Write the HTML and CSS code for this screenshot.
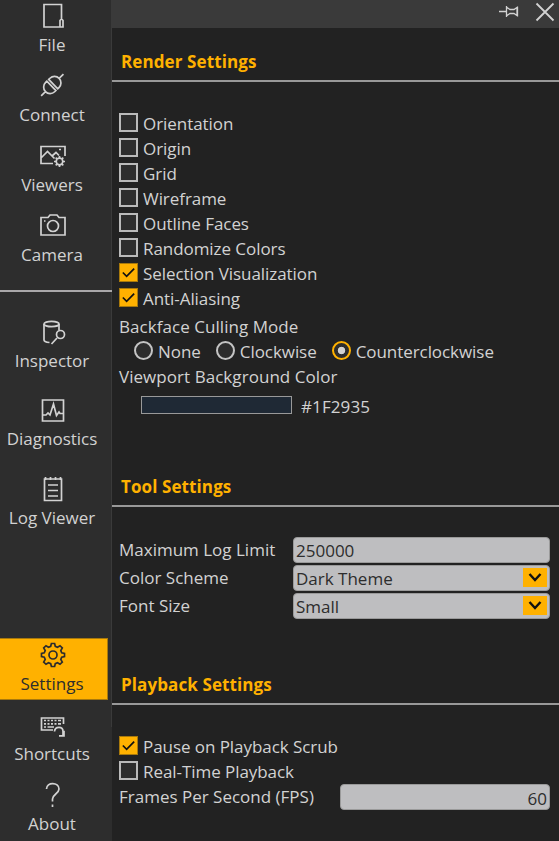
FILE: index.html
```html
<!DOCTYPE html>
<html lang="en">
<head>
<meta charset="utf-8">
<title>Settings</title>
<link rel="stylesheet" href="styles.css">
</head>
<body>
<div class="app">
  <nav class="sidebar">
    <div class="group group-top">
      <a class="item"><svg class="icon" viewBox="0 0 28 28"><path d="M22.500 17V2.500H5v22.500h17M21 18.500q1.500-2.500 3 0V25h-3z"/></svg><span>File</span></a>
      <a class="item"><svg class="icon" viewBox="0 0 28 28"><g transform="translate(13.300 13) rotate(-44)"><path d="M-1.300-6.500H-3a6.500 6.500 0 0 0 0 13h1.700zM1.300-6.500H3a6.500 6.500 0 0 1 0 13H1.300zM-9.500 0h-6M9.500 0h6"/></g></svg><span>Connect</span></a>
      <a class="item"><svg class="icon" viewBox="0 0 28 28"><path d="M14 21.500H2v-17h24V14M2.500 15.500l6-6 7 7M13 14l4-3.500 3 3M20 7.500h2"/><circle cx="20.500" cy="19.500" r="3.300"/><path d="M20.500 14v2M20.500 23v2M15 19.500h2M24 19.500h2M16.700 15.700l1.300 1.300M23 22l1.300 1.300M16.700 23.300L18 22M23 17l1.300-1.300"/></svg><span>Viewers</span></a>
      <a class="item"><svg class="icon" viewBox="0 0 28 28"><path d="M2 5.500h7l2-2.500h7l2 2.500h6v17.500H2zM5 9h1.500"/><circle cx="14" cy="14" r="5.500"/></svg><span>Camera</span></a>
    </div>
    <div class="group group-middle">
      <a class="item"><svg class="icon" viewBox="0 0 28 28"><ellipse cx="12.500" cy="5" rx="7.500" ry="2.700"/><path d="M5 5v16c0 1.500 2 2.300 5.500 2.500M20 5v6M18 19L12.500 25"/><circle cx="21.500" cy="15.500" r="4"/></svg><span>Inspector</span></a>
      <a class="item"><svg class="icon" viewBox="0 0 28 28"><path d="M3.500 3h21v21h-21zM4 18h3l2-2 2 2 3.500-11 3 11.500 2.500-3.500 1 1.500h3"/></svg><span>Diagnostics</span></a>
      <a class="item"><svg class="icon" viewBox="0 0 28 28"><path d="M5.500 4h17v21.500h-17zM9 10h10M9 15.500h10M9 21h10M6.500 2v3M11.500 2v3M16.500 2v3M21.500 2v3"/></svg><span class="low">Log Viewer</span></a>
    </div>
    <div class="group group-bottom">
      <a class="item active"><svg class="icon" viewBox="0 0 28 28"><path d="M11.700 5.300L12.400 2.500h3.200l.7 2.800 2.200.9 2.500-1.500L23.300 7l-1.500 2.500.9 2.200 2.800.7v3.200l-2.800.7-.9 2.200 1.500 2.500-2.300 2.300-2.500-1.500-2.200.9-.7 2.800h-3.200l-.7-2.800-2.200-.9L7 23.300 4.700 21l1.500-2.500-.9-2.200-2.800-.7v-3.200l2.800-.7.9-2.200L4.700 7 7 4.700l2.500 1.500z"/><circle cx="14" cy="14" r="4"/></svg><span>Settings</span></a>
      <a class="item"><svg class="icon" viewBox="0 0 28 28"><path d="M14 19H2.500V7H24.500v6M5 9.500h2M8.500 9.500h2M12 9.500h2M15.500 9.500h2M19 9.500h3M5 12.800h2M8.500 12.800h2M12 12.800h2M15.500 12.800h2M19 12.800h3M5 16h2M8.500 16h6.500M15.500 20.500c.5-5.500 8.500-5.500 8.500 0v4M20 24.800h5v-5"/></svg><span>Shortcuts</span></a>
      <a class="item"><svg class="icon" viewBox="0 0 28 28"><path d="M7.500 8c0-7.500 12.500-7 12.500 0 0 4.500-6.500 5.500-6.500 10v2.500M13.500 23.500v2.500"/></svg><span>About</span></a>
    </div>
  </nav>
  <main class="panel">
    <header class="titlebar">
      <svg class="pin" viewBox="0 0 20 14"><path d="M0 6.500h7M7.500 1v11M8 2.500l3 2h4l3-2v8l-3-2h-4l-3 2M18.500 1.500v10"/></svg>
      <svg class="close" viewBox="0 0 20 20"><path d="M1.500 1.500l17 17M18.500 1.500l-17 17"/></svg>
    </header>

    <section class="render">
      <h2>Render Settings</h2>
      <div class="fields">
        <label class="check"><i></i><span>Orientation</span></label>
        <label class="check"><i></i><span>Origin</span></label>
        <label class="check"><i></i><span>Grid</span></label>
        <label class="check"><i></i><span>Wireframe</span></label>
        <label class="check"><i></i><span>Outline Faces</span></label>
        <label class="check"><i></i><span>Randomize Colors</span></label>
        <label class="check on"><i><svg viewBox="0 0 18 18"><path d="M3 9l4 4 8-8"/></svg></i><span>Selection Visualization</span></label>
        <label class="check on"><i><svg viewBox="0 0 18 18"><path d="M3 9l4 4 8-8"/></svg></i><span>Anti-Aliasing</span></label>
        <div class="caption mode">Backface Culling Mode</div>
        <div class="radios">
          <label class="radio"><i></i><span>None</span></label>
          <label class="radio"><i></i><span>Clockwise</span></label>
          <label class="radio on"><i></i><span>Counterclockwise</span></label>
        </div>
        <div class="caption wide">Viewport Background Color</div>
        <div class="color"><i class="swatch"></i><span>#1F2935</span></div>
      </div>
    </section>

    <section class="tool">
      <h2>Tool Settings</h2>
      <div class="fields">
        <div class="row"><span>Maximum Log Limit</span><div class="box"><span>250000</span></div></div>
        <div class="row"><span>Color Scheme</span><div class="box"><span>Dark Theme</span><b class="arrow"><svg viewBox="0 0 24 19"><path d="M6.500 6l5.500 6 5.500-6"/></svg></b></div></div>
        <div class="row"><span>Font Size</span><div class="box"><span>Small</span><b class="arrow"><svg viewBox="0 0 24 19"><path d="M6.500 6l5.500 6 5.500-6"/></svg></b></div></div>
      </div>
    </section>

    <section class="playback">
      <h2>Playback Settings</h2>
      <div class="fields">
        <label class="check on"><i><svg viewBox="0 0 18 18"><path d="M3 9l4 4 8-8"/></svg></i><span>Pause on Playback Scrub</span></label>
        <label class="check"><i></i><span>Real-Time Playback</span></label>
        <div class="row fps"><span>Frames Per Second (FPS)</span><div class="box"><span>60</span></div></div>
      </div>
    </section>
  </main>
</div>
</body>
</html>
```
FILE: styles.css
```css
* { box-sizing: border-box; }
body {
  margin: 0;
  background: #222;
  color: #d2d2d2;
  font: 17px/25px "Open Sans", "Noto Sans", sans-serif;
  white-space: nowrap;
}
svg { display: block; fill: none; stroke: currentColor; }
.app { display: flex; height: 841px; overflow: hidden; }

.sidebar { width: 112px; flex: none; background: linear-gradient(#3a3a3a, #3a3a3a) right top / 1px 727px no-repeat, #2d2d2d; }
.group { display: flex; flex-direction: column; gap: 8px; }
.group-top { height: 292px; border-bottom: 2px solid #a9a7a9; }
.group-top .item:first-child { margin-top: -1px; }
.group-middle { gap: 16px; padding-top: 24px; height: 346px; }
.group-middle .item span { margin-top: 1px; }
.group-middle .item .low { margin-top: 2px; }
.item { display: flex; flex-direction: column; align-items: center; width: 107px; height: 62px; flex: none; padding: 3px 3px 0 0; }
.item span { margin-top: 2px; }
.icon { width: 28px; height: 28px; stroke-width: 1.7; margin-left: 2px; }
.active { background: #ffb100; color: #2d2d2d; border: 1px solid #a8790c; border-left: 0; padding: 2px 3px 0 0; width: 108px; }

.panel { flex: 1; }
.titlebar { height: 28px; background: #3a3a3a; display: flex; justify-content: flex-end; align-items: flex-start; gap: 16px; padding-right: 4px; }
.pin { width: 20px; height: 14px; margin-top: 5px; stroke-width: 1.3; }
.close { width: 20px; height: 20px; margin-top: 2px; stroke-width: 1.8; }
h2 { margin: 0; height: 33px; padding-left: 9px; font-size: 17px; line-height: 26px; font-weight: 700; letter-spacing: 0.1px; color: #ffb100; border-bottom: 2px solid #999; }
.fields { padding: 0 9px 0 7px; }

.render { height: 426px; padding-top: 21px; }
.render .fields { padding-top: 29px; }
.check { display: flex; height: 25px; align-items: flex-start; gap: 5px; line-height: 25px; letter-spacing: -0.06px; }
.check i { width: 19px; height: 19px; margin-top: 2px; border: 2px solid #bababa; background: #2d2d2d; }
.check.on i { border: 1px solid #a8790c; background: #ffb100; color: #111; }
.check.on svg { width: 17px; height: 17px; stroke-width: 1.8; }
.caption { height: 25px; letter-spacing: 0.05px; }
.mode { margin-top: 3px; }
.radios { display: flex; height: 25px; padding-left: 15px; letter-spacing: -0.06px; }
.radio { display: flex; gap: 5px; line-height: 25px; margin-right: 15px; }
.radio i { width: 19px; height: 19px; border: 2px solid #c4c4c4; border-radius: 50%; background: #2d2d2d; margin-top: 2px; }
.radio.on i { border-color: #ffb100; background: radial-gradient(circle, #d2d2d2 3.4px, #2d2d2d 4.1px); }
.color { display: flex; padding: 5px 0 0 22px; gap: 9px; letter-spacing: 0.1px; }
.swatch { width: 151px; height: 18px; margin-top: 2px; border: 1px solid #999; background: #1f2935; }

.tool { height: 198px; padding-top: 20px; }
.tool .fields { padding-top: 30px; }
.row { display: flex; justify-content: space-between; height: 28px; line-height: 26px; }
.box { width: 257px; height: 26px; border: 1px solid #9a9a9a; border-radius: 4px; background: #bebec0; color: #2d2d2d; display: flex; justify-content: space-between; padding: 0 2px; }
.arrow { width: 24px; height: 19px; margin-top: 2px; background: #ffb100; color: #111; }
.arrow svg { stroke-width: 2.4; }

.playback { padding-top: 20px; }
.playback .fields { padding-top: 29px; }
.fps { line-height: 25px; }
.fps .box { width: 210px; justify-content: flex-end; line-height: 27px; }
```
